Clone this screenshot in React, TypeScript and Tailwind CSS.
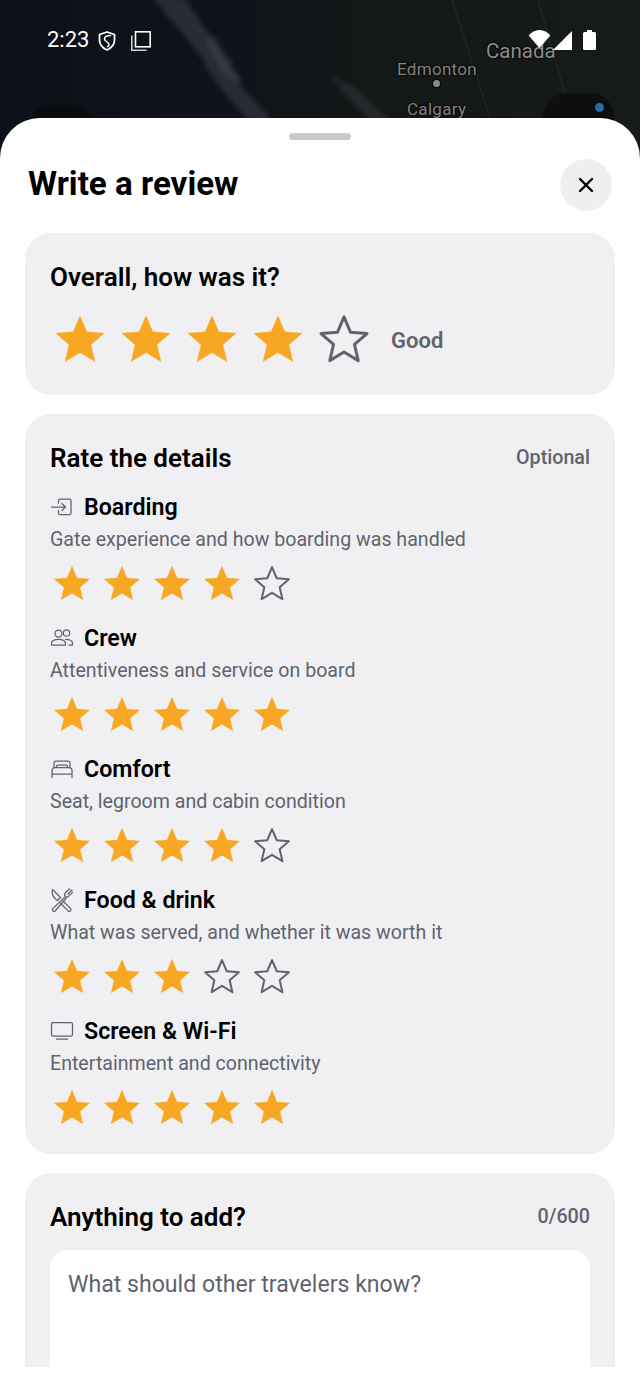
import { X } from 'lucide-react';
import type { ReactNode } from 'react';

const STAR = 'M12 17.27L18.18 21l-1.64-7.03L22 9.24l-7.19-.61L12 2 9.19 8.63 2 9.24l5.46 4.73L5.82 21z';

function Stars({ value, big = false }: { value: number; big?: boolean }) {
  return (
    <div className="flex gap-[6px]">
      {[1, 2, 3, 4, 5].map((n) => (
        <svg key={n} viewBox="0 0 24 24" className={big ? 'w-[60px] h-[60px]' : 'w-[44px] h-[44px]'}>
          {n <= value ? (
            <path d={STAR} fill="#f8a723" transform="translate(12 11.6) scale(0.96) translate(-12 -11.6)" stroke="#f8a723" strokeWidth="0.2" strokeLinejoin="round" />
          ) : (
            <path d={STAR} fill="none" stroke="#5f636e" strokeWidth={big ? 1.3 : 1.2} strokeLinejoin="round" transform="translate(12 11.6) scale(0.92) translate(-12 -11.6)" />
          )}
        </svg>
      ))}
    </div>
  );
}

function Glyph({ children }: { children: ReactNode }) {
  return (
    <svg viewBox="0 0 24 24" fill="none" stroke="#5f636e" strokeWidth="1.25" strokeLinecap="round" strokeLinejoin="round" className="w-6 h-6 shrink-0">
      {children}
    </svg>
  );
}

const BoardingIcon = () => (
  <Glyph>
    <path d="M8.500 8V5.500A1.500 1.500 0 0 1 10 4h9.500A1.500 1.500 0 0 1 21 5.500v12.500a1.500 1.500 0 0 1-1.500 1.500H10A1.500 1.500 0 0 1 8.500 18v-2.500" />
    <path d="M1.500 12h14M12 8.500l3.500 3.500-3.500 3.500" />
  </Glyph>
);

const CrewIcon = () => (
  <Glyph>
    <circle cx="8.500" cy="7.500" r="3.500" />
    <circle cx="16.500" cy="7" r="3.200" />
    <path d="M1.500 19v-1.500c0-2.600 3-4.200 7-4.200s7 1.600 7 4.200V19zM15.500 13.300c3.800 0 7 1.400 7 3.900V19h-3.500" />
  </Glyph>
);

const ComfortIcon = () => (
  <Glyph>
    <path d="M4 10.500V6A2 2 0 0 1 6 4h12a2 2 0 0 1 2 2v4.500" />
    <path d="M2 20.500V13.500a3 3 0 0 1 3-3h14a3 3 0 0 1 3 3v7M2 17h20M6.500 10.500V9a1 1 0 0 1 1-1h9a1 1 0 0 1 1 1v1.500" />
  </Glyph>
);

const FoodIcon = () => (
  <Glyph>
    <path d="M2.500 1.500c-1 3.500 0 6.500 2.500 9l2.500 2 3-3zM13 13l7.500 7.500a1.700 1.700 0 0 1-2.400 2.400l-7.600-7.600" />
    <path d="M22 2l-4 4M19.500.8l-4 4c-1 1-1 2.600-.2 3.500.9.900 2.500.8 3.500-.2l4-4M14.800 9.200L2.800 20.600a1.700 1.700 0 0 0 2.400 2.400L16 10.500" />
  </Glyph>
);

const ScreenIcon = () => (
  <Glyph>
    <rect x="1.500" y="3.500" width="21" height="13.500" rx="1.500" />
    <path d="M6.500 20h11" />
  </Glyph>
);

const DETAILS = [
  { title: 'Boarding', sub: 'Gate experience and how boarding was handled', value: 4, icon: <BoardingIcon /> },
  { title: 'Crew', sub: 'Attentiveness and service on board', value: 5, icon: <CrewIcon /> },
  { title: 'Comfort', sub: 'Seat, legroom and cabin condition', value: 4, icon: <ComfortIcon /> },
  { title: 'Food & drink', sub: 'What was served, and whether it was worth it', value: 3, icon: <FoodIcon /> },
  { title: 'Screen & Wi-Fi', sub: 'Entertainment and connectivity', value: 5, icon: <ScreenIcon /> },
];

function MapBackdrop() {
  return (
    <div className="absolute inset-x-0 top-0 h-[160px] bg-[#101319] overflow-hidden">
      <svg viewBox="0 0 640 160" className="absolute inset-0 w-full h-full">
        <defs>
          <linearGradient id="land" x1="0" x2="1" y1="0" y2="0">
            <stop offset="0" stopColor="#0c1019" />
            <stop offset="0.38" stopColor="#10131a" />
            <stop offset="0.6" stopColor="#141816" />
            <stop offset="1" stopColor="#161a18" />
          </linearGradient>
          <filter id="cloud" x="-50%" y="-50%" width="200%" height="200%">
            <feTurbulence type="fractalNoise" baseFrequency="0.09" numOctaves="3" seed="4" result="noise" />
            <feDisplacementMap in="SourceGraphic" in2="noise" scale="22" />
            <feGaussianBlur stdDeviation="2.500" />
          </filter>
        </defs>
        <rect width="640" height="160" fill="url(#land)" />
        <path d="M150 -5l34 0 26 42 30 48 36 40-24 0-28-32-30-46z" fill="#3b3d46" opacity="0.6" filter="url(#cloud)" />
        <path d="M200 30l16 8 26 46-14-4z" fill="#45474f" opacity="0.5" filter="url(#cloud)" />
        <path d="M332 76l24 12 34 34-18 0-26-26z" fill="#3b3d46" opacity="0.45" filter="url(#cloud)" />
        <path d="M452 0l38 118M538 0l34 118" stroke="#2e3234" strokeWidth="0.7" />
      </svg>
      <div className="absolute left-[30px] top-[105px] w-[62px] h-[40px] rounded-[24px] bg-[#090b0e]" />
      <div className="absolute left-[543px] top-[93px] w-[71px] h-[50px] rounded-[24px] bg-[#0c0e10]" />
      <div className="absolute left-[595px] top-[103px] w-[9px] h-[9px] rounded-full bg-[#2c6aa3]" />
      <span className="absolute left-[486px] top-[38px] text-[20.500px] leading-[26px] text-[#8c8c8c] [text-shadow:0_0_2px_#000,0_0_2px_#000]">Canada</span>
      <span className="absolute left-[397px] top-[59px] text-[17px] leading-[20px] text-[#838383] tracking-[0.3px] [text-shadow:0_0_2px_#000,0_0_2px_#000]">Edmonton</span>
      <div className="absolute left-[433px] top-[80px] w-[7px] h-[7px] rounded-full bg-[#8a8a8a] shadow-[0_0_0_1px_#000]" />
      <span className="absolute left-[407px] top-[99px] text-[17px] leading-[20px] text-[#838383] tracking-[0.3px] [text-shadow:0_0_2px_#000,0_0_2px_#000]">Calgary</span>
    </div>
  );
}

function StatusBar() {
  return (
    <div className="absolute inset-x-0 top-0 h-[80px] text-white">
      <span className="absolute left-[47px] top-[27px] text-[22px] leading-[26px]">2:23</span>
      <svg viewBox="0 0 18 20" className="absolute left-[98px] top-[31px] w-[18px] h-[20px]" fill="none" stroke="#fff" strokeWidth="1.800" strokeLinejoin="round" strokeLinecap="round">
        <path d="M9 1l7.500 2.500v5.500c0 4.500-3 8-7.500 10-4.500-2-7.500-5.500-7.500-10V3.500z" />
        <path d="M12.500 4.500C9 4.500 6.500 6 6.500 8c0 2.500 4.500 3 4.500 5.500 0 1-.7 1.800-1.500 2.200" strokeWidth="1.500" />
      </svg>
      <svg viewBox="0 0 20 20" className="absolute left-[131px] top-[31px] w-[20px] h-[20px]" fill="none" stroke="#fff" strokeWidth="1.600">
        <rect x="4.500" y=".800" width="14.700" height="15" />
        <path d="M.8 4.500V19.200h14.700" stroke="#d0d0d0" />
      </svg>
      <svg viewBox="0 0 24 20" className="absolute left-[528px] top-[30px] w-[23px] h-[18px]">
        <path d="M12 20L0 6C3 2.500 7.200 0 12 0s9 2.500 12 6z" fill="#fff" />
      </svg>
      <svg viewBox="0 0 19 19" className="absolute left-[553px] top-[31px] w-[19px] h-[19px]">
        <path d="M19 0v19H0z" fill="#fff" />
      </svg>
      <svg viewBox="0 0 13 20" className="absolute left-[583px] top-[30px] w-[13px] h-[20px]">
        <path d="M4 0h5v2h2.500A1.500 1.500 0 0 1 13 3.500v15a1.500 1.500 0 0 1-1.500 1.500h-10A1.500 1.500 0 0 1 0 18.500v-15A1.500 1.500 0 0 1 1.500 2H4z" fill="#fff" />
      </svg>
    </div>
  );
}

export default function App() {
  return (
    <div className="relative w-[640px] h-[1391px] bg-white overflow-hidden font-['Roboto',sans-serif]">
      <MapBackdrop />
      <StatusBar />

      {/* Sheet */}
      <div className="absolute inset-x-0 top-[118px] h-[1249px] bg-white rounded-t-[40px] overflow-hidden">
        <div className="w-[62px] h-[7px] rounded-full bg-[#c9cacd] mx-auto mt-[15px]" />

        <div className="flex items-center justify-between pl-7 pr-7 mt-[19px] h-[52px]">
          <h1 className="text-[33.200px] leading-[40px] font-bold text-black -mt-[3px]">Write a review</h1>
          <button className="w-[52px] h-[52px] rounded-full bg-[#efeff1] flex items-center justify-center">
            <X className="w-6 h-6 text-black" strokeWidth={2.4} />
          </button>
        </div>

        <div className="flex flex-col gap-[19px] mx-[25px] mt-[22px]">
          <section className="bg-[#f0f0f2] rounded-[26px] px-[25px] pt-7 pb-[25px]">
            <h2 className="text-[26px] leading-8 font-semibold text-black">Overall, how was it?</h2>
            <div className="flex items-center gap-[17px] mt-[17px]">
              <Stars value={4} big />
              <span className="text-[22px] font-semibold text-[#5f636e]">Good</span>
            </div>
          </section>

          <section className="bg-[#f0f0f2] rounded-[26px] px-[25px] pt-7 pb-6">
            <div className="flex items-center justify-between h-8">
              <h2 className="text-[26px] leading-8 font-semibold text-black">Rate the details</h2>
              <span className="text-[19.700px] leading-8 font-medium text-[#5f636e]">Optional</span>
            </div>
            <div className="flex flex-col gap-4 mt-[17px]">
              {DETAILS.map((d) => (
                <div key={d.title}>
                  <div className="flex items-center gap-[10px] h-8">
                    {d.icon}
                    <span className="text-[23.200px] leading-8 font-semibold text-black">{d.title}</span>
                  </div>
                  <p className="text-[19.600px] leading-6 mt-[5px] text-[#5f636e]">{d.sub}</p>
                  <div className="mt-[10px]">
                    <Stars value={d.value} />
                  </div>
                </div>
              ))}
            </div>
          </section>

          <section className="bg-[#f0f0f2] rounded-[26px] px-[25px] pt-7 h-[300px]">
            <div className="flex items-center justify-between h-8">
              <h2 className="text-[26px] leading-8 font-semibold text-black">Anything to add?</h2>
              <span className="text-[19.700px] leading-8 font-medium text-[#5f636e]">0/600</span>
            </div>
            <div className="mt-[17px] h-[200px] bg-white rounded-[18px] px-[18px] pt-[19px]">
              <p className="text-[23.100px] leading-8 text-[#5f636e]">What should other travelers know?</p>
            </div>
          </section>
        </div>
      </div>
    </div>
  );
}
